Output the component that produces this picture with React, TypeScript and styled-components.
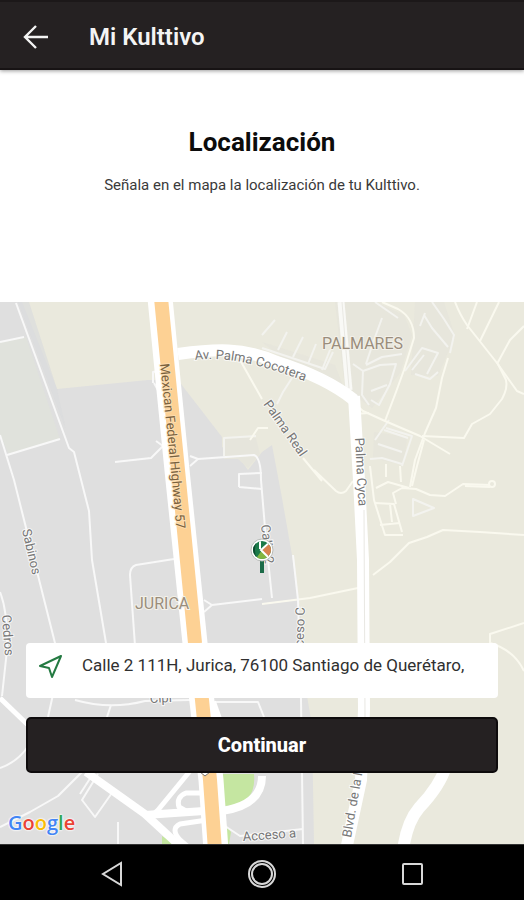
import React, { useState } from "react";
import styled, { createGlobalStyle } from "styled-components";

const GlobalStyle = createGlobalStyle`
  * { box-sizing: border-box; }
  body {
    margin: 0;
    background: #ffffff;
    font-family: Roboto, "Liberation Sans", sans-serif;
  }
`;

const Screen = styled.div`
  display: flex;
  flex-direction: column;
  min-height: 100vh;
`;

const TopBar = styled.header`
  display: flex;
  align-items: center;
  gap: 40px;
  height: 70px;
  padding: 3px 22px 0;
  background: #252122;
  border-top: 2px solid #1c1819;
  border-bottom: 2px solid #171314;
  box-shadow: 0 1px 4px rgba(0, 0, 0, 0.4);
`;

const IconButton = styled.button`
  display: flex;
  align-items: center;
  justify-content: center;
  padding: 0;
  border: 0;
  background: none;
  color: inherit;
  cursor: pointer;
`;

const BackButton = styled(IconButton)`
  width: 27px;
  height: 28px;
  color: #f4f4f4;
`;

const AppTitle = styled.span`
  color: #f4f4f4;
  font-size: 24px;
  line-height: 28px;
  font-weight: 600;
`;

const Intro = styled.section`
  display: flex;
  flex-direction: column;
  align-items: center;
  gap: 17px;
  padding: 56px 24px 106px;
  text-align: center;
`;

const Heading = styled.h1`
  margin: 0;
  color: #0c0c0c;
  font-size: 26px;
  line-height: 32px;
  font-weight: 700;
`;

const Lead = styled.p`
  margin: 0;
  color: #3a3a3a;
  font-size: 15px;
  line-height: 21px;
`;

const MapArea = styled.main`
  position: relative;
  display: flex;
  flex: 1;
  flex-direction: column;
  justify-content: flex-end;
  gap: 19px;
  padding: 26px 26px 71px;
  overflow: hidden;
  background: #eae9dd;
`;

const MapDrawing = styled.svg`
  position: absolute;
  inset: 0;
  width: 100%;
  height: 100%;
`;

const AddressCard = styled.label`
  position: relative;
  display: flex;
  align-items: center;
  gap: 19px;
  height: 55px;
  padding: 0 12px 8px;
  border-radius: 4px;
  background: #ffffff;
`;

const AddressInput = styled.input`
  flex: 1;
  min-width: 0;
  padding: 0 0 3px;
  border: 0;
  outline: 0;
  background: transparent;
  color: #303030;
  font-family: inherit;
  font-size: 17px;
  line-height: 24px;
`;

const ContinueButton = styled.button`
  position: relative;
  height: 56px;
  border: 2px solid #0e0b0c;
  border-radius: 5px;
  background: #252122;
  color: #ffffff;
  font-family: inherit;
  font-size: 20px;
  line-height: 24px;
  font-weight: 800;
  cursor: pointer;
`;

const GoogleMark = styled.a`
  position: absolute;
  left: 8px;
  bottom: 7px;
  font-family: "Open Sans", Roboto, sans-serif;
  font-size: 20px;
  line-height: 28px;
  font-weight: 600;
  text-decoration: none;
  text-shadow: 0 0 2px #ffffff, 0 0 2px #ffffff, 0 0 2px #ffffff;
`;

const Letter = styled.span<{ $color: string }>`
  color: ${(p) => p.$color};
`;

const SystemNav = styled.nav`
  display: grid;
  grid-template-columns: repeat(3, 1fr);
  height: 56px;
  padding: 3px 37px 0;
  border-top: 1px solid #333333;
  background: #000000;
  color: #d8d8d8;
`;

const ROADS: { color: string; width: number; paths: string[] }[] = [
  {
    color: "#f3f3ef",
    width: 2,
    paths: [
      "M262 335 L275 320 M278 350 L287 332 M293 357 L303 337 M308 364 L316 344 M322 370 L330 350",
      "M262 348 L325 369 L333 352",
      "M375 302 L398 318 M382 318 L374 340 L366 364 M366 365 L382 357 L402 354",
      "M353 364 L363 371 L362 395 L369 405 M363 371 L380 365 L396 364 L390 384 L379 405 L371 400 M371 391 L387 385",
      "M424 315 L432 328 L448 347 M425 313 L420 326 M432 302 L444 319 L454 335 L450 353",
      "M405 371 L422 348 L438 353 L427 374 M412 370 L424 355",
      "M415 374 L430 379 L438 372",
      "M375 440 L389 420 M378 444 L402 452 M384 430 L408 438 M370 459 L382 458 L402 464",
      "M386 428 L412 436 L402 466",
      "M413 499 L434 508 L413 516 Z",
      "M292 378 L283 392 L277 404",
      "M224 456 L224 438 L256 436",
    ],
  },
  {
    color: "#faf9ef",
    width: 2,
    paths: [
      "M382 302 L398 309 Q414 318 414 338 L404 370 L396 392 L385 421",
      "M345 395 L363 411 L385 421 L420 436 L450 454",
      "M353 414 L369 413",
      "M455 302 Q460 315 467 325 L497 363 L517 391 L524 394",
      "M477 302 L467 329 M499 302 L480 341 M497 364 L510 340 L524 326",
      "M498 364 L506 380 Q508 388 502 399 L490 414 L472 424 L464 438 L422 436",
      "M448 358 L442 378 L436 408 L425 433 L415 460 L410 487",
      "M424 440 L417 466 L412 486",
      "M370 466 L374 500 L385 535 L403 535",
      "M376 488 L388 482 L409 488 M386 464 L386 477 M400 466 L401 482",
      "M375 503 L394 504 L402 532 M390 504 L392 522 M380 525 L400 523",
      "M396 504 L393 493 L402 488 L416 489 L430 495 L445 496 L463 484 L490 485",
      "M465 486 L490 487",
      "M373 575 L390 562 L409 543 L427 537 L443 530 L480 532 L524 535",
      "M524 623 L490 634 L490 643 Q514 650 524 671",
      "M240 360 L262 399 M303 458 L322 481 M314 470 L336 491 Q341 495 346 491 L353 481",
      "M262 604 L310 598 L358 588",
      "M250 440 L258 428 L268 428",
    ],
  },
  {
    color: "#f8f8f8",
    width: 2,
    paths: [
      "M16 303 L69 448 L74 452 L89 511 L92 560 L106 643 L109 660",
      "M0 342 L24 337 M0 435 L14 480 L58 655 L54 690 L48 717",
      "M7 455 L60 439",
      "M115 462 L151 458 L163 446 L156 441",
      "M190 456 L198 459 L254 455 Q261 458 261 480 L266 540 L272 598",
      "M190 466 L198 459 M239 487 L239 474 L262 473 M239 487 L262 489",
      "M293 555 L298 600 L301 700 L303 844",
      "M153 383 L153 372 L158 371 M154 383 L159 392",
      "M136 660 L130 575 Q130 567 136 565 L174 559",
      "M262 599 L212 605 L204 600 M212 605 L204 612",
      "M0 592 Q8 612 7 650 L2 696",
      "M75 700 Q110 710 145 701 L190 700 M111 705 L107 717",
      "M0 768 Q18 762 29 745 M0 827 L30 812 L58 796 L82 772",
      "M98 774 L82 800 L95 817 L114 790 M91 777 L80 794 M118 822 L118 844",
      "M215 702 L258 702 L264 717 M225 826 L240 836 L303 829",
    ],
  },
  {
    color: "#ffffff",
    width: 5,
    paths: [
      "M0 698 L28 725",
      "M190 771 L158 810 L149 818",
      "M208 793 L186 793 Q176 797 179 807 L186 811",
      "M207 820 L180 824 Q170 829 180 840 L192 850",
    ],
  },
  {
    color: "#ffffff",
    width: 8,
    paths: [
      "M86 772 L145 814 L184 850",
      "M145 815 L204 811 M222 811 Q262 805 262 776",
      "M212 702 L222 730",
    ],
  },
  {
    color: "#ffffff",
    width: 12,
    paths: [
      "M178 354 C215 349 242 347 277 362 C315 374 338 387 354 400",
      "M354 396 L359 480 L363 560 L364 710 L361 780 L346 850",
      "M446 766 Q440 786 419 808 Q407 822 403 850",
    ],
  },
  {
    color: "#ffffff",
    width: 25,
    paths: ["M160 298 L169 390 L178 480 L195 643 L203 710 L211 780 L216 850"],
  },
  {
    color: "#fdd194",
    width: 14,
    paths: ["M161 298 L170 390 L179 480 L195 643 L202 700 L210 780 L215 850"],
  },
  {
    color: "#e9e8e3",
    width: 1,
    paths: ["M342 302 L349 388 M364 510 L365 717"],
  },
];

function StreetMap() {
  return (
    <MapDrawing
      viewBox="0 302 524 542"
      preserveAspectRatio="xMidYMid slice"
      role="img"
      aria-label="Mapa de Jurica"
    >
      <rect y="302" width="524" height="542" fill="#eae9dd" />
      <path
        fill="#dfdfdf"
        d="M0 302 H22 L57 389 L148 380 L178 380 L222 437 L222 447 L240 459 L248 470 L262 452 L272 445 L282 498 L292 555 L300 610 L306 690 L312 725 L314 844 H0 Z"
      />
      <path fill="#e0e2dc" d="M0 342 L26 337 L60 439 L9 455 L0 435 Z" />
      <path fill="#dadbdd" d="M18 302 H29 L57 389 L66 430 Z" opacity="0.7" />
      <path fill="#e6e5dc" d="M224 438 H256 L260 454 L248 468 L238 459 H224 Z" />
      <path fill="#e5e4dc" d="M335 302 H375 L404 315 L412 335 L400 373 L372 408 L345 389 Z M262 342 L335 365 L343 386 L285 360 Z" opacity="0.7" />
      <path fill="#e5e4dc" d="M415 302 H444 L455 336 L438 376 L411 375 Z M374 432 L407 437 L404 465 L373 458 Z" opacity="0.7" />
      <path fill="#c5e6a1" d="M222 774 H254 Q257 806 224 806 Z M215 706 L226 727 L216 720 Z M162 836 L176 844 H162 Z M226 826 L231 832 L229 844 H225 Z" />
      <path
        d="M341 302 L349 390"
        stroke="#f9f9f6"
        strokeWidth="7"
        fill="none"
      />
      {ROADS.map((group, i) => (
        <g
          key={i}
          stroke={group.color}
          strokeWidth={group.width}
          fill="none"
          strokeLinejoin="round"
        >
          {group.paths.map((d) => (
            <path key={d} d={d} />
          ))}
        </g>
      ))}
      <circle cx="492" cy="484" r="3" fill="#eae9dd" stroke="#faf9ef" strokeWidth="2" />
      <path d="M200 772 L205 776 L210 772" fill="#ffffff" stroke="#777777" />

      <defs>
        <path id="cocotera" d="M195 360 C225 356 258 363 315 385" />
        <path id="highway" d="M160 364 L168 440 L178 545" />
        <clipPath id="pin">
          <circle cx="262" cy="550" r="9" />
        </clipPath>
      </defs>
      <g
        fontSize="13"
        fill="#777777"
        stroke="#ffffff"
        strokeWidth="2"
        strokeOpacity="0.7"
        paintOrder="stroke"
      >
        <text>
          <textPath href="#cocotera">Av. Palma Cocotera</textPath>
        </text>
        <text fill="#79613d" stroke="#fde3bd">
          <textPath href="#highway">Mexican Federal Highway 57</textPath>
        </text>
        <text transform="translate(263 404) rotate(55)">Palma Real</text>
        <text transform="translate(355 438) rotate(87)">Palma Cyca</text>
        <text transform="translate(22 530) rotate(77)">Sabinos</text>
        <text transform="translate(2 615) rotate(86)">Cedros</text>
        <text transform="translate(261 525) rotate(84)">Calle 2</text>
        <text transform="translate(303 662) rotate(-88)">Acceso C</text>
        <text transform="translate(351 838) rotate(-80)">Blvd. de la Nación</text>
        <text transform="translate(243 841) rotate(-4)">Acceso a</text>
        <text transform="translate(150 703) rotate(-3)">Cipr</text>
      </g>
      <g
        fontSize="16"
        fill="#9a8d7c"
        stroke="#f3f1e9"
        strokeWidth="2"
        paintOrder="stroke"
      >
        <text x="322" y="349">PALMARES</text>
        <text x="135" y="609">JURICA</text>
      </g>

      <path d="M262 558 V573" stroke="#1c6b48" strokeWidth="4" />
      <circle cx="262" cy="550" r="11" fill="#ffffff" stroke="#b9bcb9" />
      <g clipPath="url(#pin)">
        <rect x="252" y="540" width="20" height="20" fill="#1b7a49" />
        <path d="M252 540 H257 Q253 550 257 560 H252 Z" fill="#0c4b30" />
        <path d="M262 550 L272 541 V560 Z" fill="#d9824f" />
        <path d="M262 550 L271 560 H255 Z" fill="#82b541" />
        <path d="M260 540 V549 M271 541 L261 550 L271 560" fill="none" stroke="#ffffff" strokeWidth="2" />
      </g>
    </MapDrawing>
  );
}

const GOOGLE: [string, string][] = [
  ["G", "#4285f4"],
  ["o", "#ea4335"],
  ["o", "#fbbc05"],
  ["g", "#4285f4"],
  ["l", "#34a853"],
  ["e", "#ea4335"],
];

export default function App() {
  const [address, setAddress] = useState(
    "Calle 2 111H, Jurica, 76100 Santiago de Querétaro,"
  );

  return (
    <Screen>
      <GlobalStyle />
      <TopBar>
        <BackButton aria-label="Atrás">
          <svg width="27" height="28" viewBox="0 0 27 28" fill="none" stroke="currentColor" strokeWidth="2.4">
            <path d="M26 14 H3 M14 3 L3 14 L14 25" />
          </svg>
        </BackButton>
        <AppTitle>Mi Kulttivo</AppTitle>
      </TopBar>

      <Intro>
        <Heading>Localización</Heading>
        <Lead>Señala en el mapa la localización de tu Kulttivo.</Lead>
      </Intro>

      <MapArea>
        <StreetMap />
        <AddressCard>
          <svg width="25" height="25" viewBox="0 0 25 25" fill="none" stroke="#247a42" strokeWidth="2" strokeLinejoin="round" aria-hidden="true">
            <path d="M23 2 L2 12 L11 14 L14 23 Z" />
          </svg>
          <AddressInput
            aria-label="Dirección"
            value={address}
            onChange={(e) => setAddress(e.target.value)}
          />
        </AddressCard>
        <ContinueButton>Continuar</ContinueButton>
        <GoogleMark href="#google" aria-label="Google">
          {GOOGLE.map(([letter, color], i) => (
            <Letter key={i} $color={color}>
              {letter}
            </Letter>
          ))}
        </GoogleMark>
      </MapArea>

      <SystemNav>
        <IconButton aria-label="Volver">
          <svg width="24" height="28" viewBox="0 0 24 28" fill="none" stroke="currentColor" strokeWidth="2">
            <path d="M21 3 V25 L3 14 Z" />
          </svg>
        </IconButton>
        <IconButton aria-label="Inicio">
          <svg width="30" height="30" viewBox="0 0 30 30" fill="none" stroke="currentColor">
            <circle cx="15" cy="15" r="13" strokeWidth="2" />
            <circle cx="15" cy="15" r="10" strokeWidth="2" />
          </svg>
        </IconButton>
        <IconButton aria-label="Recientes">
          <svg width="24" height="24" viewBox="0 0 24 24" fill="none" stroke="currentColor" strokeWidth="2">
            <rect x="3" y="2" width="19" height="20" rx="1" />
          </svg>
        </IconButton>
      </SystemNav>
    </Screen>
  );
}
